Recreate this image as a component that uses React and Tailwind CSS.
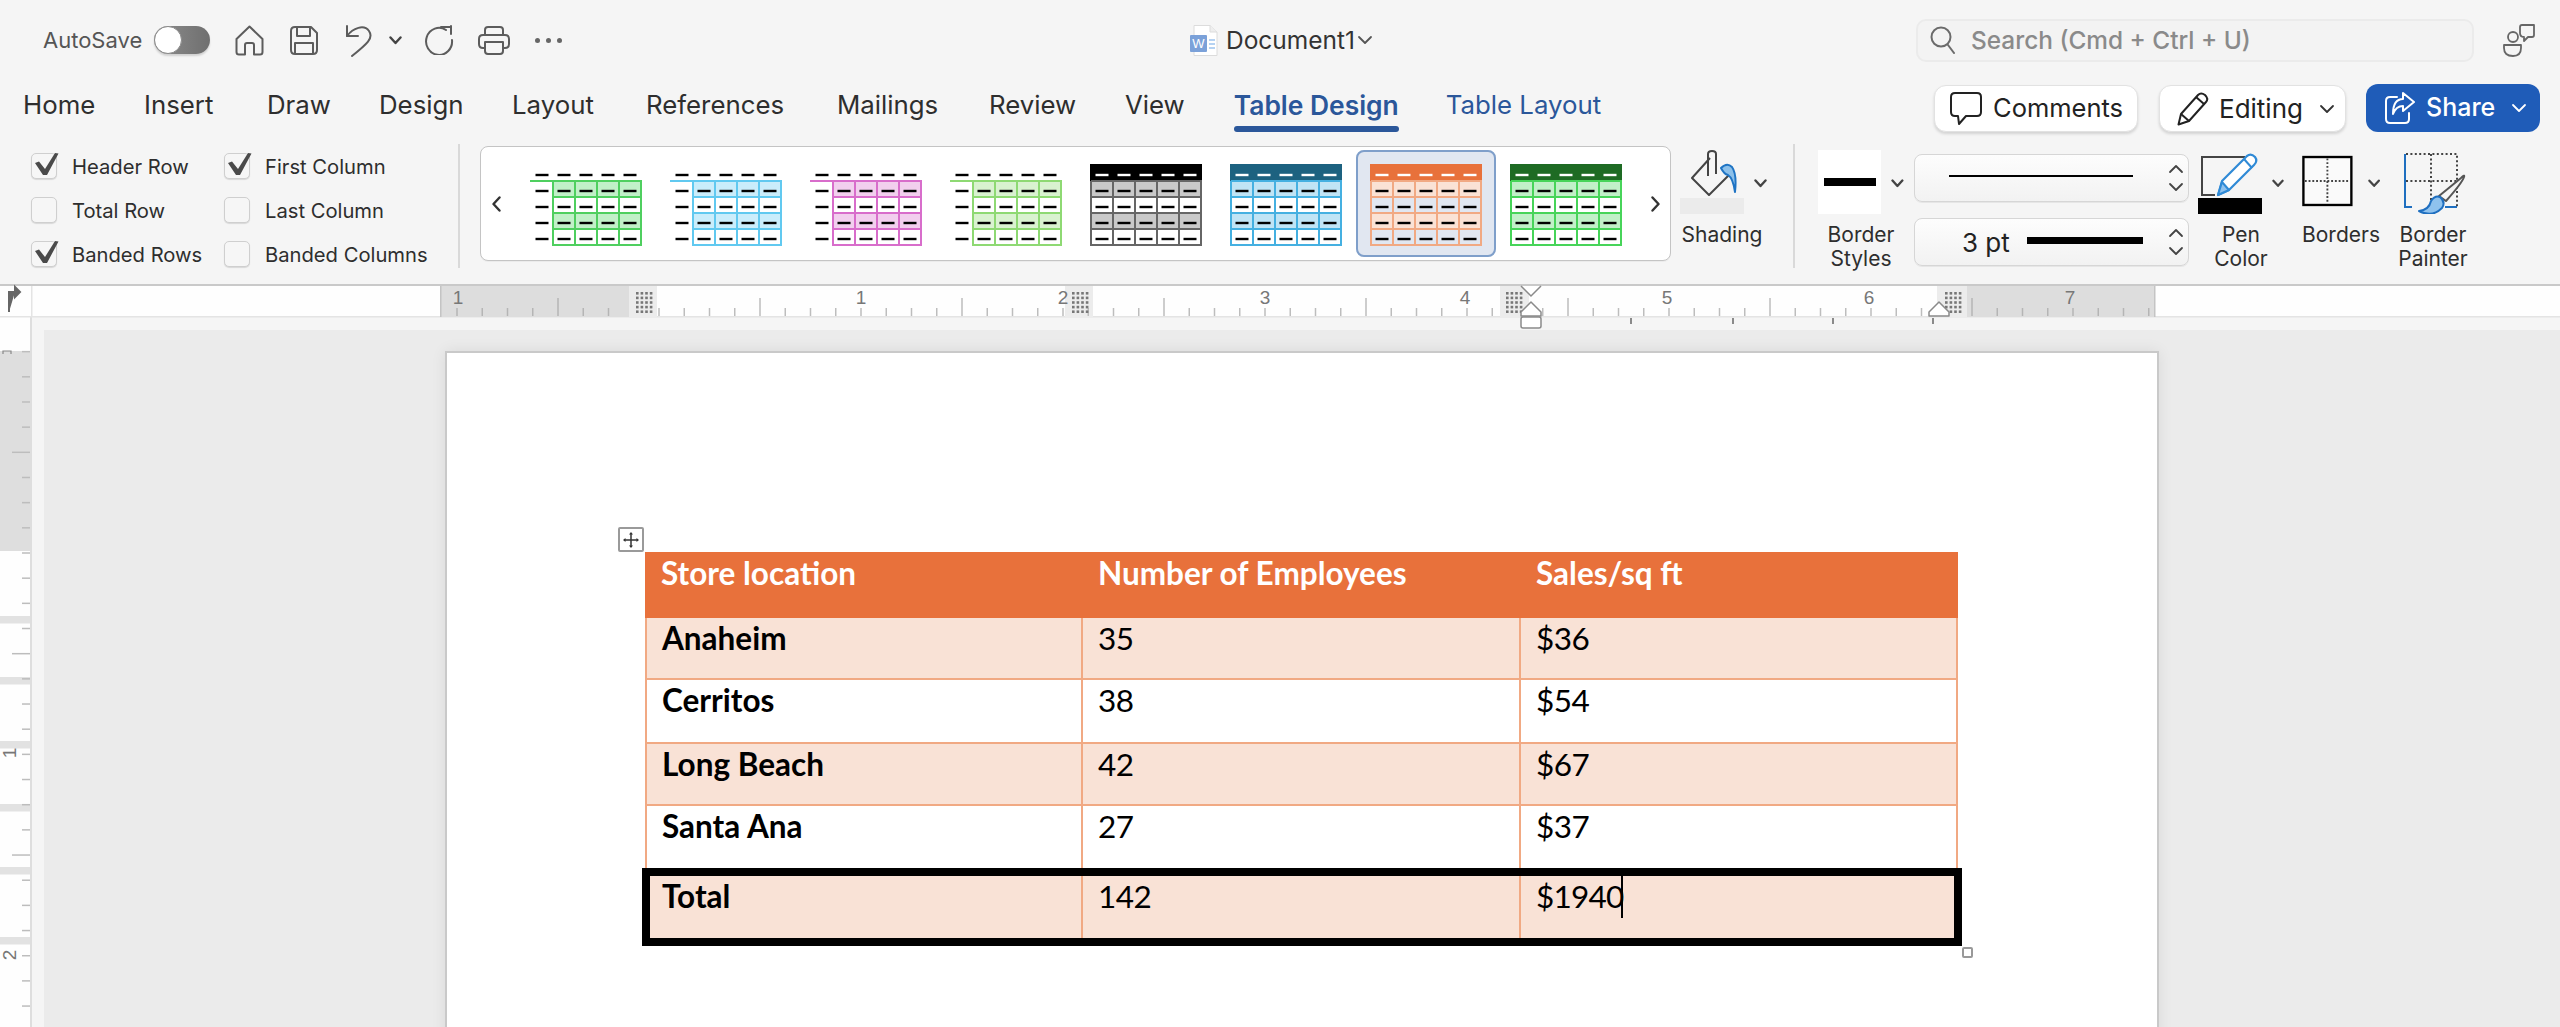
import React from "react";

const Chev = ({ className = "" }) => (
  <svg width="13" height="9" viewBox="0 0 13 9" className={className} fill="none" stroke="#444" strokeWidth="2.4" strokeLinecap="round" strokeLinejoin="round">
    <path d="M1.5 1.5 L6.5 7 L11.5 1.5" />
  </svg>
);

const Thin = ({ color = "#333", up = false, className = "" }) => (
  <svg width="16" height="10" viewBox="0 0 16 10" className={className} fill="none" stroke={color} strokeWidth="1.8" strokeLinecap="round" strokeLinejoin="round">
    <path d={up ? "M2 8 L8 2 L14 8" : "M2 2 L8 8 L14 2"} />
  </svg>
);

const I = "#5c5c5c";
const Home = () => (
  <svg width="29" height="31" viewBox="0 0 29 31" fill="none" stroke={I} strokeWidth="2" strokeLinejoin="round">
    <path d="M1.5 14 L14.5 1.5 L27.5 14 V27 Q27.5 29.5 25 29.5 H19 V20 Q19 18 17 18 H12 Q10 18 10 20 V29.5 H4 Q1.5 29.5 1.5 27 Z" />
  </svg>
);
const Save = () => (
  <svg width="28" height="29" viewBox="0 0 28 29" fill="none" stroke={I} strokeWidth="2" strokeLinejoin="round">
    <path d="M5 1 H21 L27 7 V24 Q27 28 23 28 H5 Q1 28 1 24 V5 Q1 1 5 1Z" />
    <path d="M7 1 V10 H20 V1" />
    <path d="M5 28 V17 H23 V28" />
  </svg>
);
const Undo = () => (
  <svg width="28" height="33" viewBox="0 0 28 33" fill="none" stroke={I} strokeWidth="2" strokeLinecap="round" strokeLinejoin="round">
    <path d="M2 2 V12 H13" />
    <path d="M2 12 C8 4 19 0 24 7 C29 14 22 20 7 32" />
  </svg>
);
const Redo = () => (
  <svg width="29" height="30" viewBox="0 0 29 30" fill="none" stroke={I} strokeWidth="2" strokeLinecap="round" strokeLinejoin="round">
    <path d="M21 5 A13 13.5 0 1 0 27 15" />
    <path d="M16 2 H26 V2 M26 1 V9" />
  </svg>
);
const Print = () => (
  <svg width="32" height="29" viewBox="0 0 32 29" fill="none" stroke={I} strokeWidth="2" strokeLinejoin="round">
    <path d="M7 9 V4 Q7 1 10 1 H22 Q25 1 25 4 V9" />
    <path d="M7 22 H5 Q1 22 1 18 V13 Q1 9 5 9 H27 Q31 9 31 13 V18 Q31 22 27 22 H25" />
    <path d="M7 16 H25 V25 Q25 28 22 28 H10 Q7 28 7 25 Z" />
  </svg>
);
const WordIcon = () => (
  <svg width="28" height="31" viewBox="0 0 28 31">
    <path d="M4 0.5 H20 L27 7 V30.5 H4 Z" fill="#fff" stroke="#dcdcdc" />
    <path d="M20 0.5 V7 H27" fill="#eee" stroke="#dcdcdc" />
    <path d="M19 15 H25 M19 19 H25 M19 23 H25" stroke="#6da5e6" strokeWidth="1.2" />
    <rect x="0" y="10" width="17" height="17" rx="1" fill="#7ba1d9" />
    <text x="8.5" y="23" fontSize="13" fill="#fff" textAnchor="middle" fontFamily="Liberation Sans, sans-serif">W</text>
  </svg>
);
const SearchIc = () => (
  <svg width="26" height="28" viewBox="0 0 26 28" fill="none" stroke="#6b6b6b" strokeWidth="2" strokeLinecap="round">
    <circle cx="11" cy="11" r="9.5" />
    <path d="M18 19 L24 27" />
  </svg>
);
const Coauth = () => (
  <svg width="33" height="33" viewBox="0 0 33 33" fill="none" stroke="#666" strokeWidth="1.8" strokeLinejoin="round">
    <circle cx="10" cy="13" r="5" />
    <path d="M1 21 H18 V24 Q18 32 10 32 Q1 32 1 24Z" />
    <path d="M19 1 H31 V11 Q31 13 29 13 H25 L21 17 V13 Q17 13 17 9 V3 Q17 1 19 1Z" />
  </svg>
);
const Bubble = () => (
  <svg width="32" height="33" viewBox="0 0 32 33" fill="none" stroke="#222" strokeWidth="2" strokeLinejoin="round">
    <path d="M5 1 H27 Q31 1 31 5 V20 Q31 24 27 24 H16 L9 32 L8 24 H5 Q1 24 1 20 V5 Q1 1 5 1Z" />
  </svg>
);
const Pencil = () => (
  <svg width="32" height="34" viewBox="0 0 32 34" fill="none" stroke="#222" strokeWidth="2" strokeLinejoin="round">
    <path d="M1.5 32.5 L4 22 L21 3 Q24 0 28 3 Q32 7 29 10 L12 29 Z" />
    <path d="M19 5 L27 12 M4 22 L12 29" />
  </svg>
);
const ShareIc = () => (
  <svg width="30" height="32" viewBox="0 0 30 32" fill="none" stroke="#fff" strokeWidth="2" strokeLinejoin="round" strokeLinecap="round">
    <path d="M12 5 H5 Q1 5 1 9 V27 Q1 31 5 31 H20 Q24 31 24 27 V21" />
    <path d="M18 1 L29 10 L18 19 V14 Q11 14 8 22 Q8 7 18 7 Z" />
  </svg>
);
const Bucket = () => (
  <svg width="46" height="46" viewBox="0 0 46 46" fill="none">
    <path d="M19 8 L1 28 L18 45 L40 23" stroke="#444" strokeWidth="2" strokeLinejoin="round" />
    <path d="M17 26 V4 Q17 1 21 1 Q25 1 25 4 V24" stroke="#444" strokeWidth="2" />
    <path d="M30 18 Q36 12 41 17 Q46 24 44 42 Q42 28 37 25 Q33 24 30 18Z" fill="#8cc0ea" stroke="#1f74c4" strokeWidth="2" strokeLinejoin="round" />
  </svg>
);
const PenColor = () => (
  <svg width="64" height="48" viewBox="0 0 64 48" fill="none">
    <path d="M47 7 H4 V45 H17" stroke="#444" strokeWidth="2" />
    <path d="M20 45 L24 31 L49 6 Q53 3 57 7 Q60 11 56 15 L31 40 Z" fill="#fff" stroke="#2f8ad6" strokeWidth="2.2" strokeLinejoin="round" />
    <path d="M20 45 L24 32 L31 40 Z" fill="#8fc2ee" stroke="#2f8ad6" strokeWidth="2" strokeLinejoin="round" />
    <path d="M46 9 L54 18" stroke="#2f8ad6" strokeWidth="2" />
  </svg>
);
const BordersIc = () => (
  <svg width="54" height="54" viewBox="0 0 54 54" fill="none">
    <rect x="1.5" y="1.5" width="51" height="51" fill="#fafafa" stroke="#000" strokeWidth="2.5" />
    <path d="M27 3 V51 M3 27 H51" stroke="#444" strokeWidth="2" strokeDasharray="2 2" />
  </svg>
);
const Painter = () => (
  <svg width="64" height="64" viewBox="0 0 64 64" fill="none">
    <path d="M2 4 H53 V57 M27 4 V57 M2 31 H53" stroke="#444" strokeWidth="2" strokeDasharray="2 2.4" />
    <path d="M1 4 V57 H8 M41 57 H53" stroke="#1f6fc0" strokeWidth="2" />
    <path d="M35 46 L57 28 Q61 24 60 27 Q58 33 42 51 Z" fill="#f5f5f5" stroke="#555" strokeWidth="2" strokeLinejoin="round" />
    <path d="M15 61 Q25 60 27 51 Q31 45 36 47 Q42 52 38 58 Q28 68 15 61Z" fill="#8fc2ee" stroke="#1f6fc0" strokeWidth="2" strokeLinejoin="round" />
  </svg>
);

const Check = () => (
  <svg width="28" height="26" viewBox="0 0 28 26" className="absolute left-0 -top-[1px]">
    <path d="M3 10 L7 8.5 L13 16 L23 0 L26.5 0.5 L15 22 L11 22 Z" fill="#4a4a4a" />
  </svg>
);

const CheckItem = ({ label, on }) => (
  <div className="flex items-center h-[26px]">
    <div className="relative w-[26px] h-[26px] rounded-[5px] border border-[#cfcfcf] bg-[#f6f6f6] shadow-[0_1px_1px_rgba(0,0,0,0.12)]">
      {on && <Check />}
    </div>
    <span className="ml-[15px] pt-[2px] text-[20.2px] text-[#2e2e2e] whitespace-nowrap">{label}</span>
  </div>
);

const thumbs = [
  { line: "#4fcf5f", band: "#c1f0c8" },
  { line: "#61c9f0", band: "#caedfb" },
  { line: "#d86dcb", band: "#f2cfee" },
  { line: "#8ed973", band: "#d9f2d0" },
  { head: "#000000", line: "#666666", band: "#c9c9c9" },
  { head: "#1d6280", line: "#45b0e1", band: "#c0e4f5" },
  { head: "#e8713b", line: "#f1a983", band: "#fae2d5", selected: true },
  { head: "#1e6b24", line: "#47d459", band: "#c1f0c8" },
];

const Thumb = ({ head, line, band }) => {
  const cols = [1, 23, 45, 67, 89, 111];
  const rows = [17, 33, 49, 65, 81];
  const x0 = head ? 1 : 23;
  return (
    <svg width="112" height="82" viewBox="0 0 112 82" fill="none">
      {head && <rect x="0" y="0" width="112" height="17" fill={head} />}
      <rect x={x0} y="17" width={111 - x0} height="16" fill={band} />
      <rect x={x0} y="49" width={111 - x0} height="16" fill={band} />
      {rows.map((y, i) => (
        <path key={y} d={`M${i === 0 && !head ? 0 : x0} ${y} H112`} stroke={line} strokeWidth="2" />
      ))}
      {cols.filter((x) => x >= x0).map((x) => (
        <path key={x} d={`M${x} 17 V82`} stroke={line} strokeWidth="2" />
      ))}
      {[12, 34, 56, 78, 100].map((x) =>
        [11, 27, 43, 59, 75].map((y, j) => (
          <path key={x + "-" + y} d={`M${x - 6.5} ${y} h13`} stroke={head && j === 0 ? "#fff" : "#000"} strokeWidth="2.4" />
        ))
      )}
    </svg>
  );
};

const Stepper = ({ children }) => (
  <div className="relative w-[275px] h-[48px] rounded-[8px] border border-[#d6d6d6] bg-gradient-to-b from-[#fdfdfd] to-[#f2f2f2] flex items-center shadow-[0_1px_0_rgba(0,0,0,0.06)]">
    {children}
    <div className="absolute right-[4px] top-[9px] flex flex-col gap-[8px]">
      <Thin up color="#444" />
      <Thin color="#444" />
    </div>
  </div>
);

const Label = ({ lines, className = "" }) => (
  <div className={"mt-[9px] text-center text-[21px] leading-[24px] text-[#2e2e2e] whitespace-nowrap " + className}>
    {lines.map((l) => (
      <div key={l}>{l}</div>
    ))}
  </div>
);

const tabs = ["Home", "Insert", "Draw", "Design", "Layout", "References", "Mailings", "Review", "View"];
const tabWidths = [121, 123, 112, 133, 134, 191, 152, 136];

const Dots = ({ x }) => {
  const out = [];
  for (let i = 0; i < 4; i++) for (let j = 0; j < 5; j++) out.push(<rect key={x + "-" + i + "-" + j} x={x + i * 4.6} y={6 + j * 4.6} width="2.6" height="2.6" fill="#777" />);
  return <g>{out}</g>;
};

const rulerTicks = [];
for (let k = -8; k <= 60; k++) {
  const x = 659 + k * 25.25;
  if (x > 2155) break;
  if ((x > 629 && x < 657) || (x > 1500 && x < 1521) || (x > 1937 && x < 1967)) continue;
  const long = ((k % 8) + 8) % 8 === 4;
  rulerTicks.push(<path key={k} d={`M${x} ${long ? 12 : 22} V30`} stroke={x < 629 || x > 1967 ? "#b5b5b5" : "#bdbdbd"} strokeWidth="1.5" />);
}

const Ruler = () => (
  <svg width="2560" height="44" viewBox="0 0 2560 44" className="block relative z-10 overflow-visible" fill="none">
    <rect x="0" y="0" width="2560" height="30" fill="#fefefe" />
    <rect x="0" y="30" width="2560" height="1.5" fill="#e4e4e4" />
    <rect x="31" y="0" width="1.5" height="31" fill="#e4e4e4" />
    <rect x="441" y="0" width="188" height="31" fill="#dddddd" />
    <rect x="440" y="0" width="1.5" height="31" fill="#c4c4c4" />
    <rect x="629" y="0" width="28" height="31" fill="#ececec" />
    <rect x="1065" y="0" width="28" height="31" fill="#ececec" />
    <rect x="1500" y="0" width="29" height="31" fill="#ececec" />
    <rect x="1937" y="0" width="30" height="31" fill="#ececec" />
    <rect x="1967" y="0" width="188" height="31" fill="#dddddd" />
    <rect x="2154" y="0" width="1.5" height="31" fill="#c4c4c4" />
    {rulerTicks}
    <Dots x={636} /><Dots x={1072} /><Dots x={1506} /><Dots x={1945} />
    {[[458, "1"], [861, "1"], [1063, "2"], [1265, "3"], [1465, "4"], [1667, "5"], [1869, "6"], [2070, "7"]].map(([x, t]) => (
      <text key={x} x={x} y="18" fontSize="19" fill="#777" textAnchor="middle" fontFamily="Liberation Sans, sans-serif">{t}</text>
    ))}
    <path d="M9 26 V6 H15 M15 1 L20 6 L15 11 Z" stroke="#666" strokeWidth="2" fill="#666" />
    <path d="M1521 0 L1531 10 L1541 0" fill="#fff" stroke="#8a8a8a" strokeWidth="1.5" />
    <path d="M1531 16 L1541 26 V30 H1521 V26 Z" fill="#fff" stroke="#8a8a8a" strokeWidth="1.5" strokeLinejoin="round" />
    <rect x="1521" y="31" width="20" height="11" rx="2" fill="#fff" stroke="#8a8a8a" strokeWidth="1.5" />
    <path d="M1939 16 L1949 26 V30 H1929 V26 Z" fill="#fff" stroke="#8a8a8a" strokeWidth="1.5" strokeLinejoin="round" />
    {[1631, 1733, 1833, 1933].map((x) => (
      <path key={x} d={`M${x} 32 V38`} stroke="#666" strokeWidth="1.5" />
    ))}
  </svg>
);

const LeftRuler = () => {
  const items = [];
  for (let k = -8; k <= 18; k++) {
    const y = 553 + k * 25.17 - 317;
    const long = ((k % 8) + 8) % 8 === 4;
    items.push(<path key={k} d={`M${long ? 12 : 22} ${y} H30`} stroke="#bdbdbd" strokeWidth="1.5" />);
  }
  const bands = [616, 677, 741, 804, 867, 937];
  return (
    <svg width="32" height="710" viewBox="0 0 32 710" className="block shrink-0" fill="none">
      <rect width="32" height="710" fill="#fefefe" />
      <rect x="0" y="34" width="30" height="200" fill="#dedede" />
      {bands.map((b) => (
        <rect key={b} x="0" y={b - 317} width="30" height="7.5" fill="#e2e2e2" />
      ))}
      {items}
      <rect x="30" y="0" width="2" height="710" fill="#dedede" />
      <path d="M3 37 V34 H11 V37" stroke="#888" strokeWidth="1.2" />
      <text transform={`translate(16 ${753 - 317}) rotate(-90)`} fontSize="19" fill="#777" textAnchor="middle" fontFamily="Liberation Sans, sans-serif">1</text>
      <text transform={`translate(16 ${955 - 317}) rotate(-90)`} fontSize="19" fill="#777" textAnchor="middle" fontFamily="Liberation Sans, sans-serif">2</text>
    </svg>
  );
};

const Cell = ({ children, className = "" }) => (
  <div className={"leading-[36px] text-[31.5px] text-black whitespace-nowrap [font-family:Lato,sans-serif] " + className}>{children}</div>
);

const edge = "border-[#f1a983]";
const rowsData = [
  ["Anaheim", "35", "$36", "h-[62px] bg-[#f9e2d6]"],
  ["Cerritos", "38", "$54", "h-[64px] bg-white"],
  ["Long Beach", "42", "$67", "h-[62px] bg-[#f9e2d6]"],
  ["Santa Ana", "27", "$37", "h-[62px] bg-white"],
];

const tabText = "pt-[8px] leading-[34px] text-[25.8px] whitespace-nowrap";

export default function App() {
  return (
    <div className="w-[2560px] h-[1027px] overflow-hidden flex flex-col bg-[#f5f5f5] [font-family:Inter,sans-serif]">
      {/* title bar */}
      <div className="h-[80px] shrink-0 flex items-center">
        <span className="ml-[43px] w-[100px] text-[22px] text-[#555] whitespace-nowrap">AutoSave</span>
        <div className="ml-[11px] w-[56px] h-[28px] rounded-full bg-gradient-to-r from-[#8e8e8e] to-[#6f6f6f] relative shadow-[0_2px_2px_rgba(0,0,0,0.15)]">
          <div className="absolute left-0 top-0 w-[28px] h-[28px] rounded-full bg-white border border-[#8a8a8a]" />
        </div>
        <div className="ml-[25px]"><Home /></div>
        <div className="ml-[26px]"><Save /></div>
        <div className="ml-[27px]"><Undo /></div>
        <Chev className="ml-[16px]" />
        <div className="ml-[23px]"><Redo /></div>
        <div className="ml-[24px]"><Print /></div>
        <div className="ml-[25px] flex gap-[6px]">
          <i className="w-[5px] h-[5px] rounded-full bg-[#666]" />
          <i className="w-[5px] h-[5px] rounded-full bg-[#666]" />
          <i className="w-[5px] h-[5px] rounded-full bg-[#666]" />
        </div>
        <div className="ml-[628px]"><WordIcon /></div>
        <span className="ml-[8px] text-[24.5px] text-[#333] whitespace-nowrap">Document1</span>
        <Thin color="#555" className="ml-[2px]" />
        <div className="ml-auto w-[558px] h-[43px] rounded-[10px] bg-[#f3f3f3] border-2 border-[#ebebeb] flex items-center pl-[12px]">
          <SearchIc />
          <span className="ml-[15px] text-[24.4px] font-medium text-[#8a8a8a] whitespace-nowrap">Search (Cmd + Ctrl + U)</span>
        </div>
        <div className="ml-[29px] mr-[24px]"><Coauth /></div>
      </div>

      {/* tabs */}
      <div className="h-[60px] shrink-0 flex items-start">
        <div className="pl-[23px] flex items-start">
          {tabs.map((t, i) => (
            <div key={t} style={{ width: tabWidths[i] }} className={tabText + " text-[#2e2e2e]"}>{t}</div>
          ))}
          <div className="ml-[49px] flex flex-col">
            <div className="pt-[8px] leading-[34px] text-[26.4px] font-semibold text-[#2b579a] whitespace-nowrap">Table Design</div>
            <div className="mt-[4px] h-[6px] rounded-full bg-[#2b579a]" />
          </div>
          <div className={"ml-[47px] text-[#2b579a] " + tabText}>Table Layout</div>
        </div>
        <div className="ml-auto flex items-start mr-[20px] pt-[5px]">
          <div className="w-[204px] h-[47px] rounded-[12px] bg-white border border-[#e2e2e2] shadow-[0_2px_3px_rgba(0,0,0,0.14)] flex items-center pl-[15px]">
            <Bubble />
            <span className="ml-[11px] text-[25.5px] text-[#222]">Comments</span>
          </div>
          <div className="ml-[21px] w-[187px] h-[47px] rounded-[12px] bg-white border border-[#e2e2e2] shadow-[0_2px_3px_rgba(0,0,0,0.14)] flex items-center pl-[17px]">
            <Pencil />
            <span className="ml-[10px] text-[26px] text-[#222]">Editing</span>
            <Thin color="#333" className="ml-[16px]" />
          </div>
          <div className="ml-[20px] -mt-[1px] w-[174px] h-[48px] rounded-[12px] bg-[#1f5cb8] flex items-center pl-[19px]">
            <ShareIc />
            <span className="ml-[11px] text-[25px] font-medium text-white">Share</span>
            <Thin color="#fff" className="ml-[16px]" />
          </div>
        </div>
      </div>

      {/* ribbon */}
      <div className="h-[146px] shrink-0 flex items-start border-b-2 border-[#c9c9c9]">
        <div className="ml-[31px] w-[427px] pt-[13px] grid grid-cols-[193px_1fr] gap-y-[18px]">
          <CheckItem label="Header Row" on />
          <CheckItem label="First Column" on />
          <CheckItem label="Total Row" />
          <CheckItem label="Last Column" />
          <CheckItem label="Banded Rows" on />
          <CheckItem label="Banded Columns" />
        </div>
        <div className="mt-[4px] w-[2px] h-[124px] bg-[#d9d9d9]" />
        <div className="ml-[20px] mt-[6px] w-[1191px] h-[115px] rounded-[8px] bg-white border border-[#c4c4c4] shadow-[0_1px_0_rgba(0,0,0,0.04)] flex items-start pt-[3px] pl-[11px]">
          <div className="w-[24px] h-[107px] flex items-center">
            <svg width="9" height="16" viewBox="0 0 9 16" fill="none" stroke="#333" strokeWidth="2.4" strokeLinecap="round" strokeLinejoin="round"><path d="M7.5 1.5 L1.5 8 L7.5 14.5" /></svg>
          </div>
          {thumbs.map((t, i) => (
            <div key={i} className={"w-[140px] h-[107px] pt-[14px] flex justify-center rounded-[8px] " + (t.selected ? "bg-[#e1e7f1] outline-2 -outline-offset-2 outline-[#7f9fca]" : "")}>
              <Thumb {...t} />
            </div>
          ))}
          <div className="ml-[15px] h-[107px] flex items-center">
            <svg width="9" height="16" viewBox="0 0 9 16" fill="none" stroke="#333" strokeWidth="2.4" strokeLinecap="round" strokeLinejoin="round"><path d="M1.5 1.5 L7.5 8 L1.5 14.5" /></svg>
          </div>
        </div>
        <div className="ml-[9px] w-[113px] pt-[10px] flex flex-col">
          <div className="h-[64px] flex items-start">
            <div className="w-[64px] flex flex-col">
              <div className="h-[48px] pl-[11px]"><Bucket /></div>
              <div className="h-[16px] bg-[#ebebeb]" />
            </div>
            <Chev className="ml-[10px] mt-[29px]" />
          </div>
          <Label lines={["Shading"]} className="w-[84px]" />
        </div>
        <div className="mt-[4px] w-[2px] h-[124px] bg-[#d9d9d9]" />
        <div className="ml-[23px] w-[86px] pt-[10px] flex flex-col items-center">
          <div className="h-[64px] w-full flex items-start">
            <div className="w-[64px] h-[64px] bg-white flex items-center justify-center">
              <div className="w-[52px] h-[8px] bg-black" />
            </div>
            <Chev className="ml-[10px] mt-[29px]" />
          </div>
          <Label lines={["Border", "Styles"]} />
        </div>
        <div className="ml-[10px] pt-[14px] flex flex-col gap-[16px]">
          <Stepper>
            <div className="ml-[34px] mb-[4px] w-[184px] h-[2px] bg-black" />
          </Stepper>
          <Stepper>
            <span className="ml-[47px] text-[26px] text-[#222]">3 pt</span>
            <div className="ml-[17px] mb-[3px] w-[116px] h-[7px] bg-black" />
          </Stepper>
        </div>
        <div className="ml-[9px] w-[86px] pt-[10px] flex flex-col items-center">
          <div className="h-[64px] w-full flex items-start">
            <div className="w-[64px] flex flex-col">
              <div className="h-[48px]"><PenColor /></div>
              <div className="h-[16px] bg-black" />
            </div>
            <Chev className="ml-[10px] mt-[29px]" />
          </div>
          <Label lines={["Pen", "Color"]} />
        </div>
        <div className="ml-[18px] w-[78px] pt-[10px] flex flex-col items-center">
          <div className="h-[64px] w-full flex items-start pt-[4px]">
            <BordersIc />
            <Chev className="ml-[15px] mt-[25px]" />
          </div>
          <Label lines={["Borders"]} />
        </div>
        <div className="ml-[24px] w-[58px] pt-[10px] flex flex-col items-center">
          <div className="h-[64px] w-full"><Painter /></div>
          <Label lines={["Border", "Painter"]} />
        </div>
      </div>

      {/* ruler */}
      <div className="h-[31px] shrink-0"><Ruler /></div>

      {/* body */}
      <div className="flex-1 min-h-0 flex">
        <LeftRuler />
        <div className="flex-1 min-w-0 pl-[12px] pt-[13px] flex flex-col">
          <div className="flex-1 min-h-0 bg-[#ebebeb] pl-[401px] pt-[21px] overflow-hidden">
            <div className="w-[1714px] h-[720px] bg-white border-2 border-[#c9c9c9] pt-[199px] pl-[198px] shadow-[0_0_14px_rgba(0,0,0,0.08)]">
              <div className="relative w-[1313px]">
                <div className="absolute -left-[27px] -top-[25px] w-[26px] h-[25px] rounded-[2px] border-2 border-[#9a9a9a] bg-white flex items-center justify-center">
                  <svg width="18" height="18" viewBox="0 0 18 18" fill="none" stroke="#333" strokeWidth="1.5">
                    <path d="M9 2 V16 M2 9 H16" />
                    <path d="M7 3.5 L9 1 L11 3.5Z M7 14.5 L9 17 L11 14.5Z M3.5 7 L1 9 L3.5 11Z M14.5 7 L17 9 L14.5 11Z" fill="#333" stroke="none" />
                  </svg>
                </div>
                <div className="h-[66px] grid grid-cols-[438px_438px_437px] bg-[#e8713b]">
                  <Cell className="!text-white font-bold pl-[16px] pt-[3px]">Store location</Cell>
                  <Cell className="!text-white font-bold pl-[15px] pt-[3px]">Number of Employees</Cell>
                  <Cell className="!text-white font-bold pl-[15px] pt-[3px]">Sales/sq ft</Cell>
                </div>
                {rowsData.map(([a, b, c, cls], i) => (
                  <div key={a} className={"grid grid-cols-[436px_438px_1fr] box-border border-l-2 border-r-2 " + edge + " " + cls + (i < 3 ? " border-b-2" : "")}>
                    <Cell className={"font-bold pl-[15px] pt-[2px] border-r-2 " + edge}>{a}</Cell>
                    <Cell className={"pl-[15px] pt-[2px] tracking-[-0.5px] border-r-2 " + edge}>{b}</Cell>
                    <Cell className="pl-[15px] pt-[2px] tracking-[-0.5px]">{c}</Cell>
                  </div>
                ))}
                <div className="-ml-[3px] w-[1320px] h-[78px] border-[8px] border-black bg-[#f9e2d6] grid grid-cols-[433px_438px_1fr]">
                  <Cell className={"font-bold pt-[2px] pl-[12px] border-r-2 " + edge}>Total</Cell>
                  <Cell className={"pt-[2px] pl-[15px] tracking-[-0.5px] border-r-2 " + edge}>142</Cell>
                  <Cell className="pt-[2px] pl-[15px] tracking-[-0.8px] relative">
                    $1940
                    <span className="absolute left-[100px] top-0 w-[2px] h-[42px] bg-black" />
                  </Cell>
                </div>
                <div className="absolute left-[1317px] top-[395px] w-[11px] h-[11px] rounded-[2px] border-2 border-[#999] bg-white" />
              </div>
            </div>
          </div>
        </div>
      </div>
    </div>
  );
}
